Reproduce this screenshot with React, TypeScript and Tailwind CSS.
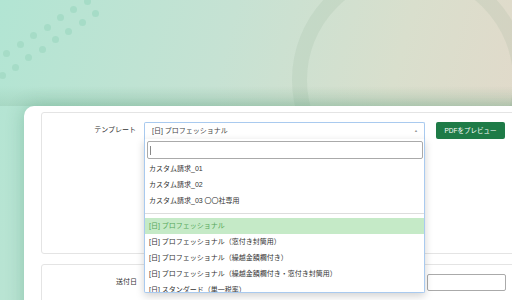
const dots: [number, number][] = [
  [87, 1], [73, 9], [60, 17], [47, 27], [33, 35], [20, 44], [6, 53],
  [95, 13], [82, 22], [68, 31], [55, 39], [42, 49], [28, 57], [15, 67], [2, 75],
];

const customTemplates = ['カスタム請求_01', 'カスタム請求_02', 'カスタム請求_03 〇〇社専用'];

const builtinTemplates = [
  '[日] プロフェッショナル',
  '[日] プロフェッショナル（窓付き封筒用）',
  '[日] プロフェッショナル（繰越金額欄付き）',
  '[日] プロフェッショナル（繰越金額欄付き・窓付き封筒用）',
  '[日] スタンダード（単一税率）',
];

function TemplateSelect() {
  return (
    <div className="relative w-[281px]">
      <div className="flex h-[17px] items-center justify-between rounded-t-[2px] border border-b-0 border-[#a9caef] bg-white pl-[7px] pr-[6px] text-[7px] text-[#444]">
        <span>[日] プロフェッショナル</span>
        <span className="text-[4px] text-[#999]">▲</span>
      </div>
      <div className="absolute left-0 top-[17px] z-10 h-[154px] w-[281px] overflow-hidden rounded-b-[2px] border border-t-0 border-[#a9caef] bg-white shadow-[0_3px_8px_rgba(0,0,0,0.18)]">
        <div className="pl-[2px] pr-[1px] pt-[2px]">
          <div className="flex h-[18px] items-center rounded-[2px] border border-[#aaa] pl-[2px]">
            <div className="h-[9px] w-px bg-[#888]" />
          </div>
        </div>
        <ul className="mt-[2px] text-[7px] text-[#333]">
          {customTemplates.map((name) => (
            <li key={name} className="flex h-[16px] items-center pl-[4px]">
              {name}
            </li>
          ))}
          <li className="my-[4px] h-px bg-[#ddd]" />
          {builtinTemplates.map((name, i) => (
            <li
              key={name}
              className={
                i === 0
                  ? 'flex h-[16px] items-center bg-[#c5eac7] pl-[4px] text-[#56a85a]'
                  : 'flex h-[16px] items-center pl-[4px]'
              }
            >
              {name}
            </li>
          ))}
        </ul>
      </div>
    </div>
  );
}

export default function App() {
  return (
    <div
      className="relative h-[300px] w-[512px] overflow-hidden bg-[linear-gradient(105deg,#b2e5d3_0%,#c6e2d3_40%,#d9dfcd_70%,#e4d8c9_100%)]"
      style={{ fontFamily: '"Liberation Sans", "Noto Sans CJK JP", sans-serif' }}
    >
      {dots.map(([x, y]) => (
        <div
          key={`${x}-${y}`}
          className="absolute h-[7px] w-[7px] rounded-full bg-[#a6dcc7]"
          style={{ left: x - 3, top: y - 3 }}
        />
      ))}
      <div className="absolute left-[292px] top-[-38px] h-[236px] w-[236px] rounded-full border-[15px] border-[rgba(110,150,120,0.1)]" />
      <div className="absolute inset-x-0 top-[86px] h-[20px] bg-[linear-gradient(to_bottom,rgba(120,170,140,0),rgba(120,170,140,0.22))]" />

      <div className="relative ml-[24px] mt-[106px] h-[220px] w-[520px] rounded-tl-[10px] bg-white pl-[17px] pt-[6px] shadow-[0_0_18px_rgba(40,130,90,0.3)]">
        <div className="h-[142px] rounded-[3px] border border-[#e4e4e4] pt-[9px]">
          <div className="flex items-start">
            <div className="flex h-[17px] w-[94px] items-center justify-end text-[7px] text-[#333]">
              テンプレート
            </div>
            <div className="ml-[8px]">
              <TemplateSelect />
            </div>
            <button
              type="button"
              className="ml-[11px] flex h-[17px] w-[69px] items-center justify-center rounded-[2px] bg-[#1e7b47] text-[6.5px] text-white"
            >
              PDFをプレビュー
            </button>
          </div>
        </div>

        <div className="mt-[10px] h-[60px] rounded-[3px] border border-[#e4e4e4] pt-[9px]">
          <div className="flex items-center">
            <div className="flex h-[17px] w-[95px] items-center justify-end text-[7px] text-[#333]">
              送付日
            </div>
            <div className="ml-[290px] h-[17px] w-[79px] rounded-[2px] border border-[#aaa] bg-white" />
          </div>
        </div>
      </div>
    </div>
  );
}
